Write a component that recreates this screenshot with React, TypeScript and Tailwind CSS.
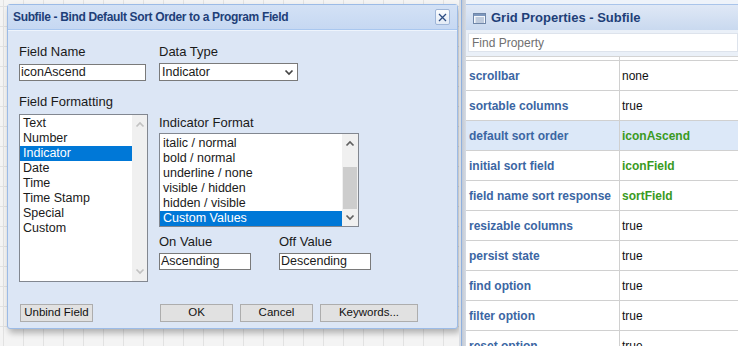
import React from "react";

const F = "font-['Liberation_Sans',Arial,sans-serif]";

function ChevUp({ color }: { color: string }) {
  return (
    <svg width="10" height="7" viewBox="0 0 10 7">
      <polyline points="1.5,5.5 5,2 8.5,5.5" fill="none" stroke={color} strokeWidth="1.7" />
    </svg>
  );
}
function ChevDown({ color }: { color: string }) {
  return (
    <svg width="10" height="7" viewBox="0 0 10 7">
      <polyline points="1.5,1.5 5,5 8.5,1.5" fill="none" stroke={color} strokeWidth="1.7" />
    </svg>
  );
}

const leftItems = ["Text", "Number", "Indicator", "Date", "Time", "Time Stamp", "Special", "Custom"];
const fmtItems = ["italic / normal", "bold / normal", "underline / none", "visible / hidden", "hidden / visible", "Custom Values"];

const rows: { k: string; v: string; green?: boolean; hl?: boolean }[] = [
  { k: "scrollbar", v: "none" },
  { k: "sortable columns", v: "true" },
  { k: "default sort order", v: "iconAscend", green: true, hl: true },
  { k: "initial sort field", v: "iconField", green: true },
  { k: "field name sort response", v: "sortField", green: true },
  { k: "resizable columns", v: "true" },
  { k: "persist state", v: "true" },
  { k: "find option", v: "true" },
  { k: "filter option", v: "true" },
  { k: "reset option", v: "true" },
];

function Btn({ label, w }: { label: string; w: string }) {
  return (
    <div
      className={`${w} h-[18px] flex items-center justify-center bg-[#e1e1e1] border border-[#adadad] text-[11.5px] text-[#111]`}
    >
      {label}
    </div>
  );
}

export default function App() {
  return (
    <div className={`${F} w-[738px] h-[346px] overflow-hidden flex bg-[#f2f2f2]`}>
      {/* left canvas */}
      <div className="w-[459px] h-full shrink-0 bg-[#f4f4f4] bg-[linear-gradient(to_right,#e2e2e2_1px,transparent_1px),linear-gradient(to_bottom,#e2e2e2_1px,transparent_1px)] bg-[size:20px_20px] bg-[position:3px_6px] pt-[4px] pl-[7px]">
        <div className="w-[451px] h-[325px] flex flex-col border border-[#9cbbe6] rounded-[3px] bg-[#dce6f5] shadow-[2px_4px_6px_rgba(0,0,0,0.28)]">
          {/* title */}
          <div className="h-[25px] shrink-0 flex items-center justify-between pl-[5px] pr-[7px] bg-[linear-gradient(to_bottom,#d3e1f5,#c6d8f2)] border-b border-[#a9c7ef]">
            <span className="text-[12px] font-bold text-[#1e3f78] tracking-[-0.35px]">
              Subfile - Bind Default Sort Order to a Program Field
            </span>
            <div className="w-[15px] h-[16px] flex items-center justify-center bg-[linear-gradient(to_bottom,#fbfcfe,#e3ebf6)] border border-[#9fb6d8] rounded-[2px]">
              <svg width="9" height="9" viewBox="0 0 9 9">
                <path d="M1 1 L8 8 M8 1 L1 8" stroke="#2c4c83" strokeWidth="1.3" />
              </svg>
            </div>
          </div>
          <div className="h-[1px] shrink-0 bg-[#eef4fc]" />
          {/* body */}
          <div className="flex flex-col pl-[11px] pt-[13px] text-[#1a1a1a]">
            <div className="flex gap-[13px]">
              <div className="flex flex-col w-[127px]">
                <div className="h-[15px] leading-[15px] text-[13px]">Field Name</div>
                <div className="mt-[5px] h-[17px] bg-white border border-[#7a7a7a] flex items-center pl-[1px] text-[12.5px]">
                  iconAscend
                </div>
              </div>
              <div className="flex flex-col w-[139px]">
                <div className="h-[15px] leading-[15px] text-[13px]">Data Type</div>
                <div className="mt-[4px] h-[18px] bg-white border border-[#7a7a7a] flex items-center justify-between pl-[2px] pr-[3px] text-[12.5px]">
                  <span>Indicator</span>
                  <ChevDown color="#444" />
                </div>
              </div>
            </div>
            <div className="flex gap-[11px] mt-[13px]">
              <div className="flex flex-col w-[129px]">
                <div className="h-[15px] leading-[15px] text-[13px]">Field Formatting</div>
                <div className="mt-[5px] h-[168px] bg-white border border-[#828790] flex">
                  <div className="flex-1 flex flex-col pt-[1px]">
                    {leftItems.map((t) => (
                      <div
                        key={t}
                        className={`h-[15px] leading-[15px] pl-[3px] text-[12.5px] ${
                          t === "Indicator" ? "bg-[#0078d7] text-white" : ""
                        }`}
                      >
                        {t}
                      </div>
                    ))}
                  </div>
                  <div className="w-[15px] bg-[#f0f0f0] flex flex-col items-center justify-between py-[6px]">
                    <ChevUp color="#c2c2c2" />
                    <ChevDown color="#c2c2c2" />
                  </div>
                </div>
              </div>
              <div className="flex flex-col">
                <div className="mt-[21px] h-[15px] leading-[15px] text-[13px]">Indicator Format</div>
                <div className="mt-[3px] w-[200px] h-[94px] bg-white border border-[#828790] flex">
                  <div className="flex-1 flex flex-col pt-[2px]">
                    {fmtItems.map((t) => (
                      <div
                        key={t}
                        className={`h-[15px] leading-[15px] pl-[3px] text-[12.5px] ${
                          t === "Custom Values" ? "bg-[#0078d7] text-white" : ""
                        }`}
                      >
                        {t}
                      </div>
                    ))}
                  </div>
                  <div className="w-[16px] bg-[#f0f0f0] flex flex-col items-center">
                    <div className="h-[18px] flex items-center justify-center">
                      <ChevUp color="#606060" />
                    </div>
                    <div className="mt-[15px] w-[14px] h-[42px] bg-[#cdcdcd]" />
                    <div className="flex-1 flex items-center justify-center">
                      <ChevDown color="#606060" />
                    </div>
                  </div>
                </div>
                <div className="flex gap-[28px] mt-[7px]">
                  <div className="flex flex-col w-[92px]">
                    <div className="h-[15px] leading-[15px] text-[13px]">On Value</div>
                    <div className="mt-[4px] h-[17px] bg-white border border-[#7a7a7a] flex items-center pl-[1px] text-[12.5px]">
                      Ascending
                    </div>
                  </div>
                  <div className="flex flex-col w-[92px]">
                    <div className="h-[15px] leading-[15px] text-[13px]">Off Value</div>
                    <div className="mt-[4px] h-[17px] bg-white border border-[#7a7a7a] flex items-center pl-[1px] text-[12.5px]">
                      Descending
                    </div>
                  </div>
                </div>
              </div>
            </div>
            <div className="flex mt-[22px] ml-[1px]">
              <Btn label="Unbind Field" w="w-[73px]" />
              <div className="flex gap-[7px] ml-[67px]">
                <Btn label="OK" w="w-[73px]" />
                <Btn label="Cancel" w="w-[73px]" />
                <Btn label="Keywords..." w="w-[98px]" />
              </div>
            </div>
          </div>
        </div>
      </div>

      {/* splitter */}
      <div className="w-[7px] h-full shrink-0 flex">
        <div className="w-[2px] bg-[#dadde2]" />
        <div className="w-[1px] bg-[#8fb0de]" />
        <div className="w-[4px] bg-[linear-gradient(to_right,#c3cad5,#d6dbe3)]" />
      </div>

      {/* right panel */}
      <div className="flex-1 h-full flex flex-col bg-[#eaf0f8] overflow-hidden">
        <div className="h-[5px] shrink-0 bg-[#eef3fa] border-b border-[#a9c4ea]" />
        <div className="h-[25px] shrink-0 flex items-center gap-[5px] pl-[7px] pt-[1px] bg-[linear-gradient(to_bottom,#dfe8f6,#c9d9ef)]">
          <svg width="13" height="11" viewBox="0 0 13 11">
            <rect x="0.5" y="0.5" width="12" height="10" fill="#f4f7fb" stroke="#6f86a8" />
            <rect x="1" y="1" width="11" height="2" fill="#7d97bd" />
            <path d="M3 5 H11 M3 7 H11 M3 9 H11" stroke="#8aa0c0" strokeWidth="1" />
            <path d="M2 5 H2.5 M2 7 H2.5 M2 9 H2.5" stroke="#8aa0c0" strokeWidth="1" />
          </svg>
          <span className="text-[13px] font-bold text-[#1e3f78]">Grid Properties - Subfile</span>
        </div>
        <div className="h-[3px] shrink-0" />
        <div className="ml-[2px] h-[19px] shrink-0 bg-white border border-[#dde3ec] flex items-center pl-[3px] text-[12px] text-[#707070]">
          Find Property
        </div>
        <div className="flex-1 min-h-0 overflow-hidden bg-white mt-[4px] border-t border-[#d4d4d4] flex flex-col">
          <div className="h-[3px] shrink-0 flex">
            <div className="w-[154px] border-r border-[#d0d0d0]" />
          </div>
          {rows.map((r) => (
            <div
              key={r.k}
              className={`h-[30px] shrink-0 flex border-t border-[#d0d0d0] ${r.hl ? "bg-[#dce8f8]" : ""}`}
            >
              <div className="w-[154px] border-r border-[#d0d0d0] flex items-center pl-[3px] text-[12px] font-bold text-[#3b66a3]">
                {r.k}
              </div>
              <div
                className={`flex-1 flex items-center pl-[2px] text-[12px] ${
                  r.green ? "font-bold text-[#3a9a22]" : "text-[#111]"
                }`}
              >
                {r.v}
              </div>
            </div>
          ))}
        </div>
      </div>
    </div>
  );
}
